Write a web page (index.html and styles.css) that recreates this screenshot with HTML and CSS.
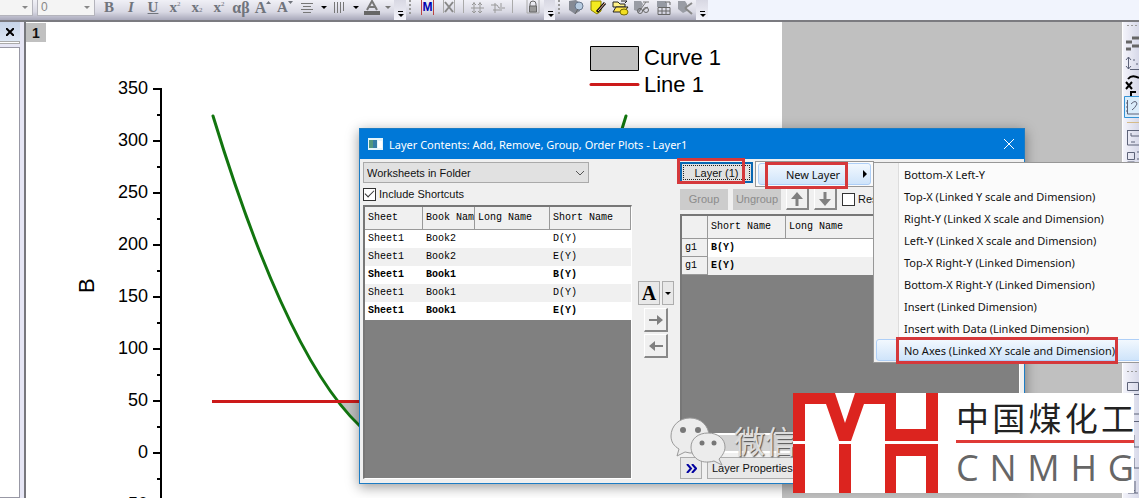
FILE: index.html
```html
<!DOCTYPE html>
<html lang="en">
<head>
<meta charset="utf-8">
<title>Layer Contents</title>
<link rel="stylesheet" href="styles.css">
</head>
<body>
<div class="app">
  <header class="toolbar">
    <div class="bar bar-format">
      <select class="combo combo-font" aria-label="Font"><option></option></select>
      <select class="combo combo-size" aria-label="Font size"><option>0</option></select>
      <button class="tool serif">B</button>
      <button class="tool serif italic">I</button>
      <button class="tool serif underline">U</button>
      <button class="tool serif">x<sup>2</sup></button>
      <button class="tool serif">x<sub>2</sub></button>
      <button class="tool serif">x<sup>2</sup></button>
      <button class="tool serif greek">αβ</button>
      <button class="tool serif large">A<svg width="5" height="9" viewBox="0 0 5 9"><path d="M0 4 2.500 1 5 4z" fill="#70747c"/></svg></button>
      <button class="tool serif">A<svg width="5" height="9" viewBox="0 0 5 9"><path d="M0 1h5L2.500 4z" fill="#70747c"/></svg></button>
      <button class="tool" aria-label="Align"><svg width="14" height="14" viewBox="0 0 14 14"><path d="M1 2.500h12M3 5.500h8M1 8.500h12M3 11.500h8" stroke="#777"/></svg></button>
      <button class="drop" aria-label="Align options"></button>
      <button class="tool" aria-label="Columns"><svg width="14" height="14" viewBox="0 0 14 14"><path d="M1.500 1v11M4.500 1v11M7.500 1v11M10.500 1v9" stroke="#777"/></svg></button>
      <button class="drop" aria-label="Column options"></button>
      <button class="tool" aria-label="Font color"><svg width="18" height="16" viewBox="0 0 18 16"><path d="M4 10 9 1l5 9M6 7h6" fill="none" stroke="#777" stroke-width="2"/><path d="M1 11h16v4H1z" fill="#666"/></svg></button>
      <button class="drop pale" aria-label="Color options"></button>
      <button class="more" aria-label="More"></button>
    </div>
    <div class="bar bar-mask">
      <span class="grip"></span>
      <button class="tool mask" aria-label="Mask">M</button>
      <button class="tool" aria-label="Clear mask"><svg width="14" height="15" viewBox="0 0 14 15"><path d="M1.500 0v13M12.500 0v13" stroke="#aaa"/><path d="m3 2 8 10M11 2 3 12" stroke="#888" stroke-width="2"/></svg></button>
      <span class="sep"></span>
      <button class="tool" aria-label="Move points"><svg width="16" height="14" viewBox="0 0 16 14"><path d="M2 7h13M5 1v11M11 1v11" stroke="#999"/><path d="m3 4 2-2 2 2M9 4l2-2 2 2M3 10l2 2 2-2M9 10l2 2 2-2" fill="none" stroke="#999"/></svg></button>
      <button class="tool" aria-label="Remove points"><svg width="16" height="14" viewBox="0 0 16 14"><path d="M1 4h6l2 3h6M3 9h9M5 2v10M11 2v4" fill="none" stroke="#999"/></svg></button>
      <span class="sep"></span>
      <button class="tool lock" aria-label="Lock"><svg width="14" height="15" viewBox="0 0 14 15"><path d="M1 0v13h12V0" fill="none" stroke="#aaa"/><path d="M4 6V4a3 3 0 0 1 6 0v2" fill="none" stroke="#666"/><path d="M3.500 6h7v6h-7z" fill="#999" stroke="#666"/></svg></button>
      <button class="more" aria-label="More"></button>
    </div>
    <div class="bar bar-data">
      <span class="grip"></span>
      <button class="tool" aria-label="Find data"><svg width="17" height="15" viewBox="0 0 17 15"><path d="M1 1l7-1 4 3v8l-5 3-6-4z" fill="#858993"/><circle cx="11" cy="6" r="4" fill="#b7cbe0" stroke="#66758b"/><path d="m10 9-3 5" stroke="#666"/></svg></button>
      <button class="tool" aria-label="Edit data"><svg width="17" height="15" viewBox="0 0 17 15"><path d="M1 1h10v10l-4 3-6-4z" fill="#f4ea20" stroke="#8d8100"/><path d="m7 12 8-9" stroke="#111" stroke-width="3"/><path d="m8 11 7-8" stroke="#f7b9a8"/></svg></button>
      <button class="tool" aria-label="Open data"><svg width="17" height="16" viewBox="0 0 17 16"><path d="M1 2h5l2 2h5v3H1z" fill="#fff28a" stroke="#222"/><path d="M9 1h6l-2 2" fill="none" stroke="#222"/><path d="M1 12 4 7h12l-4 5z" fill="#ffe44c" stroke="#222"/><ellipse cx="12" cy="12" rx="4" ry="3" fill="#f2df20" stroke="#746900"/></svg></button>
      <button class="tool" aria-label="View data"><svg width="17" height="15" viewBox="0 0 17 15"><path d="M1 1h7l2 3-3 8-6-2z" fill="#999ca4"/><path d="m5 13 8-11m-3 0h6M9 11l6-4" stroke="#777"/><circle cx="7" cy="11" r="2.500" fill="none" stroke="#666"/><circle cx="13" cy="10" r="2.500" fill="none" stroke="#666"/></svg></button>
      <button class="tool" aria-label="Data table"><svg width="17" height="16" viewBox="0 0 17 16"><path d="M2 1h8l2 2v4H2z" fill="#969aa3"/><path d="M3 7.500h12v7H3zM3 11h12M7 7v8M11 7v8M10 2h5v3" fill="none" stroke="#666"/></svg></button>
      <button class="tool" aria-label="Delete data"><svg width="17" height="15" viewBox="0 0 17 15"><path d="M1 1h7l2 3v7l-4 2-5-4z" fill="#999ca4"/><path d="m8 8 7-5M8 8l7 6" stroke="#888" stroke-width="2"/></svg></button>
      <button class="more" aria-label="More"></button>
    </div>
  </header>

  <main class="workspace">
    <aside class="dock">
      <button class="dock-close" aria-label="Close panel"><svg width="8" height="8" viewBox="0 0 8 8"><path d="m0 0 8 8M8 0 0 8" stroke="#000" stroke-width="2"/></svg></button>
      <div class="dock-strip"></div>
      <div class="dock-body"></div>
    </aside>
    <section class="sheet">
      <button class="layer-tab">1</button>
      <svg class="chart" width="756" height="476" viewBox="26 22 756 476">
        <path d="M339 402H500L420 455Q378 455 339 402Z" fill="#c0c0c0"/>
        <path d="M161 89V500" stroke="#000" stroke-width="2"/>
        <path d="M153 89h9M153 141h9M153 193h9M153 245h9M153 297h9M153 349h9M153 401h9M153 453h9" stroke="#000" stroke-width="2"/>
        <path d="M157 115h4M157 167h4M157 219h4M157 271h4M157 323h4M157 375h4M157 427h4M157 479h4" stroke="#000" stroke-width="2"/>
        <g class="ticks">
          <text x="148" y="94">350</text><text x="148" y="146">300</text>
          <text x="148" y="198">250</text><text x="148" y="250">200</text>
          <text x="148" y="302">150</text><text x="148" y="354">100</text>
          <text x="148" y="406">50</text><text x="148" y="458">0</text>
          <text x="148" y="510">-50</text>
        </g>
        <text class="axis-name" transform="translate(94 293) rotate(-90)">B</text>
        <path d="M213 116Q420 793 626 116" fill="none" stroke="#12750f" stroke-width="3" stroke-linecap="round"/>
        <path d="M212 401.500H500" stroke="#cc1a1a" stroke-width="3"/>
        <path d="M590.500 46.500h48v24h-48z" fill="#c0c0c0" stroke="#000"/>
        <path d="M591 84.500h47" stroke="#cc1a1a" stroke-width="3" stroke-linecap="round"/>
        <text class="legend" x="644" y="65">Curve 1</text>
        <text class="legend" x="644" y="92">Line 1</text>
      </svg>
    </section>
    <div class="desk"></div>
    <aside class="side-tools">
      <svg width="16" height="476" viewBox="0 0 16 476" fill="none" stroke="#5d6378">
        <path d="M4 3.500h12" stroke-dasharray="2 2" stroke="#999"/>
        <path d="M9 16h7M3 20h6M9 24h7M3 27h5" stroke="#666" stroke-width="3"/>
        <path d="M5.500 35v12M3 38l2.500-3L8 38M3 44l2.500 3L8 44M7 47.500h9M10 38h2M13 42h2"/>
        <path d="m3 60 6 7M9 60l-6 7M5 57q4-5 11-1M7 70h6M8 69v5" stroke="#000" stroke-width="2"/>
        <path d="M1.500 74.500H17v21H1.500z" stroke="#3593d5" fill="#d9ecfa"/>
        <path d="M4.500 78v14H16M8 82q5-5 6 0-2 4-5 6M3 81h2M3 85h2M3 89h2"/>
        <path d="M4 100.500h12" stroke="#d5bb88"/>
        <path d="M4.500 108.500H16M4.500 108v15H16M8 111v3h8M8 120h4"/>
        <path d="M4.500 130.500h7v7h-7zM14 130h2M4.500 140h7M14 137h2"/>
        <path d="M4 349.500h12" stroke-dasharray="2 2" stroke="#999"/>
        <path d="M4.500 360.500h11v8h-11zM4 372.500h12M4.500 383v9H16M4.500 399.500H16M5 414.500h4v10H5zM11 413v12h5M5 438v8h3M11 436v10h5M5 463l7 6M12 459v12M5 471h10"/>
      </svg>
    </aside>
  </main>

  <section class="dialog" role="dialog" aria-labelledby="dialog-title">
    <header class="titlebar">
      <svg width="15" height="12" viewBox="0 0 15 12"><path d="M0 0h15v12H0z" fill="#e4f5fb"/><path d="M1 2h8v8H1z" fill="#52977e"/><path d="M5 2h4v8H5z" fill="#347da5"/><path d="M10 3h4v7h-4z" fill="#fff"/></svg>
      <h1 id="dialog-title">Layer Contents: Add, Remove, Group, Order Plots - Layer1</h1>
      <button class="close" aria-label="Close"><svg width="10" height="10" viewBox="0 0 10 10"><path d="m0 0 10 10M10 0 0 10" stroke="#fff"/></svg></button>
    </header>
    <div class="content">
      <div class="available">
        <select class="source" aria-label="Source"><option>Worksheets in Folder</option></select>
        <label class="check"><input type="checkbox" checked>Include Shortcuts</label>
        <div class="list">
          <table>
            <colgroup><col class="c-sheet"><col class="c-book"><col class="c-long"><col></colgroup>
            <thead><tr><th>Sheet</th><th>Book Nam</th><th>Long Name</th><th>Short Name</th></tr></thead>
            <tbody>
              <tr><td>Sheet1</td><td>Book2</td><td></td><td>D(Y)</td></tr>
              <tr><td>Sheet1</td><td>Book2</td><td></td><td>E(Y)</td></tr>
              <tr class="used"><td>Sheet1</td><td>Book1</td><td></td><td>B(Y)</td></tr>
              <tr><td>Sheet1</td><td>Book1</td><td></td><td>D(Y)</td></tr>
              <tr class="used"><td>Sheet1</td><td>Book1</td><td></td><td>E(Y)</td></tr>
            </tbody>
          </table>
        </div>
      </div>
      <div class="transfer">
        <div class="plot-type"><button class="flat type">A</button><button class="flat type-drop" aria-label="Plot type"></button></div>
        <button class="raised" aria-label="Add"><svg width="14" height="10" viewBox="0 0 14 10"><path d="M0 4h8V0l6 5-6 5V6H0z" fill="#808080"/></svg></button>
        <button class="raised" aria-label="Remove"><svg width="14" height="10" viewBox="0 0 14 10"><path d="M14 4H6V0L0 5l6 5V6h8z" fill="#808080"/></svg></button>
      </div>
      <div class="selected">
        <button class="layer-button">Layer (1)</button>
        <div class="actions">
          <button class="disabled" disabled>Group</button>
          <button class="disabled" disabled>Ungroup</button>
          <button class="raised" aria-label="Move up"><svg width="12" height="14" viewBox="0 0 12 14"><path d="M4.500 14V7H0l6-7 6 7H7.500v7z" fill="#808080"/></svg></button>
          <button class="raised" aria-label="Move down"><svg width="12" height="14" viewBox="0 0 12 14"><path d="M4.500 0v7H0l6 7 6-7H7.500V0z" fill="#808080"/></svg></button>
          <label class="check"><input type="checkbox">Rescale</label>
        </div>
        <div class="list">
          <table>
            <colgroup><col class="c-group"><col class="c-short"><col></colgroup>
            <thead><tr><th></th><th>Short Name</th><th>Long Name</th></tr></thead>
            <tbody>
              <tr class="used"><th>g1</th><td>B(Y)</td><td></td></tr>
              <tr class="used"><th>g1</th><td>E(Y)</td><td></td></tr>
            </tbody>
          </table>
        </div>
        <div class="scroll"></div>
        <div class="footer"><button class="flat expand" aria-label="Expand"><svg width="11" height="9" viewBox="0 0 11 9"><path d="m1 0 4 4.500L1 9M6 0l4 4.500L6 9" fill="none" stroke="#0000a0" stroke-width="2"/></svg></button><button class="flat props">Layer Properties...</button></div>
      </div>
    </div>
  </section>

  <nav class="menu popup"><button class="hot">New Layer<span class="arrow"></span></button></nav>
  <nav class="menu submenu">
    <button>Bottom-X Left-Y</button>
    <button>Top-X (Linked Y scale and Dimension)</button>
    <button>Right-Y (Linked X scale and Dimension)</button>
    <button>Left-Y (Linked X scale and Dimension)</button>
    <button>Top-X Right-Y (Linked Dimension)</button>
    <button>Bottom-X Right-Y (Linked Dimension)</button>
    <button>Insert (Linked Dimension)</button>
    <button>Insert with Data (Linked Dimension)</button>
    <button class="hot">No Axes (Linked XY scale and Dimension)</button>
  </nav>
  <div class="mark mark-layer"></div>
  <div class="mark mark-new"></div>
  <div class="mark mark-axes"></div>

  <div class="wechat">
    <svg width="56" height="50" viewBox="0 0 56 50"><g fill="#ececec" stroke="#999"><path d="M20 1c11 0 19 8 19 18S31 36 20 36l-5-1-8 4 2-7C4 29 1 25 1 19 1 9 9 1 20 1Z"/><path d="M38 16c10 0 17 6 17 14 0 5-3 9-6 12l3 6-8-4c-14 4-23-4-23-14 0-8 7-14 17-14Z"/></g><g fill="#777"><circle cx="13" cy="13" r="3"/><circle cx="28" cy="13" r="3"/><circle cx="32" cy="26" r="2.500"/><circle cx="44" cy="26" r="2.500"/></g></svg>
    <span>微信</span>
  </div>
  <div class="brand">
    <svg width="145" height="100" viewBox="0 0 145 100" fill="#dc241f"><path d="M0 0H42L52 30 62 0H103V36H133V0H145V48H92V11H71L58 48H46L33 11H12V48H0z"/><path d="M0 51h12v49H0zM46 51h12v49H46zM92 51h53v49h-12V63h-30v37H92z"/></svg>
    <div class="brand-text"><div class="brand-cn"><span>中</span><span>国</span><span>煤</span><span>化</span><span>工</span></div><div class="brand-en"><span>C</span><span>N</span><span>M</span><span>H</span><span>G</span></div></div>
  </div>
</div>
</body>
</html>
```
FILE: styles.css
```css
* { box-sizing: border-box; }
body { margin: 0; overflow: hidden; font-family: "Liberation Sans", Arial, sans-serif; font-size: 11px; color: #111; }
button, select, input { font: inherit; color: inherit; margin: 0; padding: 0; }
button { border: 0; background: none; }
svg { display: block; flex: none; }
.app { position: relative; display: flex; flex-direction: column; min-height: 100vh; overflow: hidden; }

.toolbar { display: flex; height: 22px; background: #f1f4fd; border-bottom: 2px solid #7b7b80; }
.bar { display: flex; align-items: flex-start; background: linear-gradient(#f0f0f6, #d8d8e3 60%, #a8a8ba); }
.combo { appearance: none; height: 16px; border: 1px solid #b4b4bc; border-top: 0; border-radius: 0; color: #888; background: #f4f4f4 url("data:image/svg+xml,%3Csvg xmlns='http://www.w3.org/2000/svg' width='6' height='3'%3E%3Cpath d='M0 0h6L3 3z' fill='%23888'/%3E%3C/svg%3E") no-repeat right 4px top 6px; }
.combo-font { width: 33px; border-left: 0; margin-right: 4px; }
.combo-size { width: 58px; padding: 0 0 2px 3px; margin-right: 3px; font-size: 12px; }
.tool { display: flex; justify-content: center; align-items: center; width: 22px; height: 15px; color: #70747c; line-height: 15px; }
.serif { font-family: "Liberation Serif", serif; font-weight: bold; font-size: 15px; }
.serif sup, .serif sub { font-size: 7px; line-height: 9px; font-weight: normal; }
.serif sup { align-self: flex-start; }
.serif sub { align-self: flex-end; }
.serif svg { align-self: flex-start; }
.italic { font-style: italic; }
.underline { text-decoration: underline; }
.greek, .large { font-size: 16px; }
.drop { width: 16px; height: 15px; display: flex; justify-content: center; align-items: center; }
.bar-format .drop { width: 12px; }
.bar-format .drop + .tool { width: 20px; }
.drop::before, .type-drop::before { content: ""; border: 3px solid transparent; border-top-color: #000; border-bottom: 0; }
.pale::before { border-top-color: #777; }
.more { position: relative; width: 12px; height: 20px; background: linear-gradient(#d8d8e3, #f3f3fa); }
.more::before { content: ""; display: block; width: 5px; border-top: 1px solid #000; margin: 8px auto 0 4px; }
.more::after { content: ""; display: block; width: 0; margin: 2px 0 0 4px; border: 3px solid transparent; border-top-color: #000; border-bottom: 0; }
.grip { width: 3px; height: 14px; margin: 0 5px 0 3px; border-left: 2px dotted #999; }
.sep { width: 1px; height: 13px; margin: 0 3px 0 4px; background: #aaa; }
.mask { width: 14px; margin: 0 4px; border: 1px solid #b44; border-width: 0 1px; color: #0000b0; font-size: 12px; font-weight: bold; }
.lock { margin-left: 7px; }
.bar-mask { width: 149px; }
.bar-mask .more, .bar-data .more { margin-left: auto; }
.bar-data { width: 153px; }

.workspace { display: flex; flex: 1; background: #c0c0c0; }
.dock { display: flex; flex-direction: column; width: 26px; background: #e6e6f5; border-right: 2px solid #77777d; padding-right: 4px; }
.dock-close { display: grid; place-items: center; height: 19px; background: linear-gradient(#c7d5e8, #dbe6f4); }
.dock-strip { height: 3px; border: 1px solid #aaa; border-left: 0; background: #fff; margin-bottom: 3px; }
.dock-body { flex: 1; background: #fff; border: 1px solid #9898a5; border-left: 0; }
.sheet { position: relative; flex: 756 1 0; min-width: 0; background: #fff; overflow: hidden; }
.layer-tab { position: absolute; left: 0; top: 1px; width: 20px; height: 19px; background: #c0c0c0; font-size: 14px; font-weight: bold; }
.desk { flex: 340 1 0; }
.side-tools { width: 17px; background: linear-gradient(90deg, #f4f4fb, #d7d9e9); border-left: 1px solid #fff; overflow: hidden; }
.ticks text { font-size: 18px; text-anchor: end; }
.axis-name { font-size: 22px; }
.legend { font-size: 22px; }

.dialog { position: absolute; left: 359px; top: 128px; width: 666px; background: #f0f0f0; border: 1px solid #1c7cc4; box-shadow: 0 3px 12px #0006; }
.titlebar { display: flex; align-items: center; gap: 6px; height: 30px; padding: 0 10px 0 8px; background: #0078d7; color: #fff; }
.titlebar h1 { flex: 1; margin: 0; font: 11px "Noto Sans", sans-serif; }
.close { display: grid; place-items: center; }
.content { display: grid; grid-template-columns: 269px 36px 1fr; column-gap: 6px; padding: 3px 4px 4px 3px; height: 324px; }
.available, .selected { display: flex; flex-direction: column; min-width: 0; }
.source { appearance: none; width: 226px; height: 21px; padding-left: 3px; border: 1px solid #aaa; border-radius: 0; background: #e1e1e1 url("data:image/svg+xml,%3Csvg xmlns='http://www.w3.org/2000/svg' width='10' height='6'%3E%3Cpath d='m1 1 4 4 4-4' fill='none' stroke='%23555'/%3E%3C/svg%3E") no-repeat right 3px center; }
.check { display: flex; align-items: center; gap: 3px; white-space: nowrap; }
.check input { appearance: none; width: 13px; height: 13px; border: 1px solid #333; background: #fff; display: grid; place-items: center; }
.check input:checked::after { content: ""; width: 8px; height: 4px; border: solid #333; border-width: 0 0 1px 1px; transform: rotate(-45deg); margin-bottom: 3px; }
.available .check { height: 22px; }
.list { flex: 1; min-height: 0; background: #808080; border: 2px solid #777; border-right: 1px solid #fff; border-bottom: 1px solid #fff; }
table { width: 100%; table-layout: fixed; border-collapse: separate; border-spacing: 0; font: 10px "Liberation Mono", monospace; color: #000; }
th, td { padding: 0 0 0 3px; text-align: left; font-weight: normal; white-space: nowrap; overflow: hidden; height: 18px; line-height: 16px; }
thead th { height: 23px; background: #f0f0f0; border-right: 1px solid #999; border-bottom: 1px solid #999; }
tbody tr { background: #fff; }
tbody tr:nth-child(even) { background: #f0f0f0; }
tbody th { background: #f0f0f0; border-right: 1px solid #999; border-bottom: 1px solid #999; }
.used td { font-weight: bold; }
.c-sheet { width: 58px; }
.c-book { width: 52px; }
.c-long { width: 75px; }
.c-group { width: 26px; }
.c-short { width: 78px; }
.transfer { display: flex; flex-direction: column; align-items: center; gap: 2px; padding-top: 119px; }
.plot-type { display: flex; gap: 2px; margin-bottom: 1px; }
.flat { border: 1px solid #adadad; background: #e8e8e8; }
.type { width: 22px; height: 24px; font: bold 20px "Liberation Serif", serif; line-height: 22px; color: #000; }
.type-drop { display: grid; place-items: center; width: 12px; }
.raised { display: grid; place-items: center; width: 24px; height: 24px; border: 1px solid #fff; border-right: 2px solid #888; border-bottom: 2px solid #888; background: #f0f0f0; }
.layer-button { width: 73px; height: 21px; border: 2px solid #0867b3; outline: 1px dotted #222; outline-offset: -4px; background: #e1e1e1; }
.actions { display: flex; align-items: center; gap: 5px; height: 26px; margin: 3px 0 2px; }
.actions .raised { width: 23px; height: 22px; }
.disabled { width: 48px; height: 21px; background: #ccc; color: #8b8b8b; }
.scroll { height: 19px; background: #d4d4d4; border-top: 1px solid #fff; border-bottom: 2px solid #fff; margin-bottom: 4px; }
.footer { display: flex; gap: 5px; height: 22px; }
.expand { display: grid; place-items: center; width: 22px; }
.props { padding: 0 4px; }

.menu { position: absolute; background: #fbfbfb; border: 1px solid #979797; font: 11px "Noto Sans", sans-serif; }
.menu button { display: flex; align-items: center; width: 100%; height: 22px; white-space: nowrap; }
.menu .hot { border: 1px solid #aecff7; border-radius: 3px; background: linear-gradient(#f2f8fe, #cfe4fa); }
.popup { left: 755px; top: 161px; width: 119px; padding: 1px 2px; }
.popup .hot { padding: 0 3px 0 27px; justify-content: space-between; }
.arrow { border: 4px solid transparent; border-left-color: #000; border-right: 0; }
.submenu { left: 873px; right: -6px; top: 162px; padding: 0 2px 1px; background: linear-gradient(90deg, #f1f1f1 24px, #ddd 24px, #ddd 25px, #fbfbfb 25px); }
.submenu button { padding-left: 28px; }
.submenu .hot { padding-left: 27px; }
.mark { position: absolute; border: 3px solid #d5383b; pointer-events: none; }
.mark-layer { left: 677px; top: 158px; width: 68px; height: 26px; }
.mark-new { left: 765px; top: 162px; width: 83px; height: 27px; }
.mark-axes { left: 896px; top: 337px; width: 222px; height: 27px; }

.wechat { position: absolute; left: 670px; top: 417px; display: flex; gap: 8px; font: 31px "Noto Sans CJK SC", sans-serif; line-height: 46px; color: #ddd; text-shadow: 1px 1px 1px #555; }
.brand { position: absolute; left: 793px; top: 393px; display: flex; gap: 18px; width: 341px; height: 100px; background: #fff; }
.brand-text { flex: 1; color: #222; }
.brand-cn, .brand-en { display: flex; justify-content: space-between; }
.brand-cn { height: 50px; border-bottom: 3px solid #df3a36; font: 33px "Noto Sans CJK SC", sans-serif; line-height: 48px; }
.brand-en { font: 36px "Open Sans", sans-serif; line-height: 50px; color: #666; }
```
